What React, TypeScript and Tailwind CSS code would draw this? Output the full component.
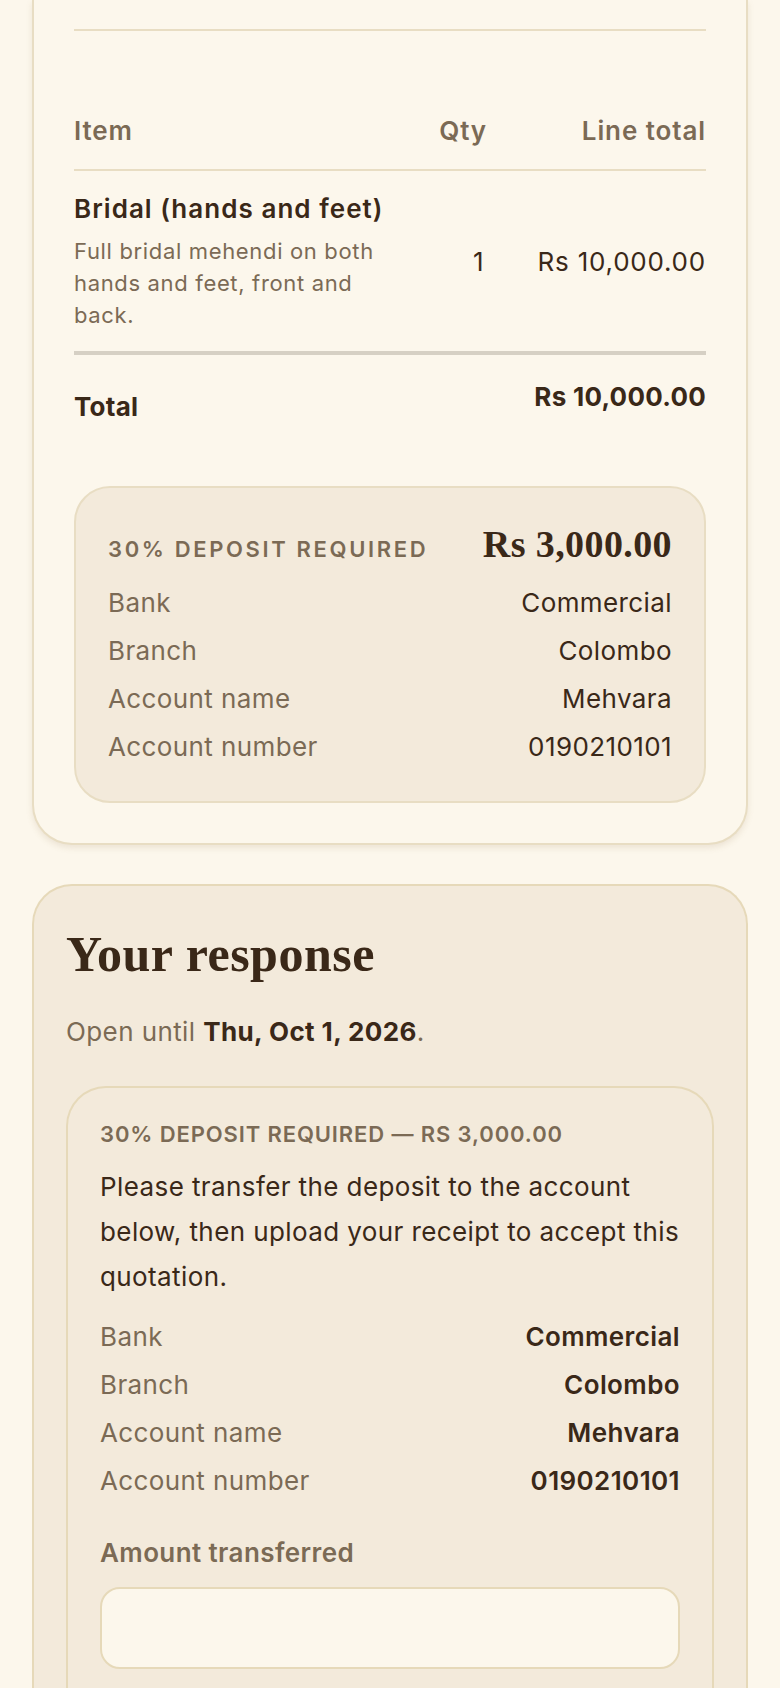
import React from "react";

const sans = "font-['Inter','Noto_Sans',sans-serif]";
const serif = "font-['Liberation_Serif','DejaVu_Serif',serif]";

type Detail = { label: string; value: string };

const bankDetails: Detail[] = [
  { label: "Bank", value: "Commercial" },
  { label: "Branch", value: "Colombo" },
  { label: "Account name", value: "Mehvara" },
  { label: "Account number", value: "0190210101" },
];

function DetailRows({ bold }: { bold?: boolean }) {
  return (
    <div className="flex flex-col gap-2">
      {bankDetails.map((d) => (
        <div key={d.label} className="flex items-center justify-between text-[26px] leading-[40px]">
          <span className="text-[#7b6a55]">{d.label}</span>
          <span className={bold ? "font-semibold text-[#3a2818]" : "text-[#3a2818]"}>{d.value}</span>
        </div>
      ))}
    </div>
  );
}

function QuoteCard() {
  return (
    <div className="rounded-b-[40px] border-2 border-t-0 border-[#e8ddc3] bg-[#fcf7ec] px-10 pb-10 shadow-[0_3px_6px_rgba(140,115,70,0.14)]">
      <div className="pt-[29px]">
        <div className="h-[2px] bg-[#e8ddc3]" />
      </div>

      {/* line items */}
      <div className="mt-[82px]">
        <div className="grid grid-cols-[minmax(0,1fr)_60px_219px] border-b-2 border-[#e8ddc3] pb-5 text-[26px] font-semibold leading-[36px] tracking-[0.035em] text-[#7b6a55]">
          <span>Item</span>
          <span className="text-right">Qty</span>
          <span className="text-right">Line total</span>
        </div>
        <div className="grid grid-cols-[minmax(0,1fr)_60px_219px] items-center border-b-4 border-[#d6d0c4] pb-5 pt-5">
          <div>
            <div className="whitespace-nowrap text-[26px] font-semibold leading-[36px] tracking-[0.04em] text-[#3a2818]">
              Bridal (hands and feet)
            </div>
            <p className="mt-2 w-[320px] text-[22px] leading-[32px] tracking-[0.03em] text-[#7b6a55]">
              Full bridal mehendi on both hands and feet, front and back.
            </p>
          </div>
          <span className="pr-[3px] text-right text-[26px] text-[#3a2818]">1</span>
          <span className="text-right text-[26px] tracking-[0.03em] text-[#3a2818]">Rs 10,000.00</span>
        </div>
        <div className="flex items-start justify-between pt-6 text-[26px] font-bold leading-[36px] tracking-[0.01em] text-[#3a2818]">
          <span className="mt-[10px]">Total</span>
          <span>Rs 10,000.00</span>
        </div>
      </div>

      {/* deposit summary */}
      <div className="mt-[61px] rounded-[36px] border-2 border-[#e8ddc3] bg-[#f3eadb] px-8 pb-[34px] pt-8">
        <div className="flex items-baseline justify-between">
          <span className="text-[22px] font-semibold uppercase tracking-[0.12em] text-[#7b6a55]">
            30% deposit required
          </span>
          <span className={`${serif} text-[38px] font-bold leading-[48px] text-[#3a2818]`}>Rs 3,000.00</span>
        </div>
        <div className="mt-[15px]">
          <DetailRows />
        </div>
      </div>
    </div>
  );
}

function ResponseCard() {
  return (
    <div className="mt-[39px] rounded-t-[40px] border-2 border-b-0 border-[#e6d9b9] bg-[#f3eadb] px-8 pt-[40px]">
      <h2 className={`${serif} text-[50px] font-bold leading-[56px] tracking-[0.01em] text-[#3a2818]`}>
        Your response
      </h2>
      <p className="mt-8 text-[26px] leading-[36px] text-[#7b6a55]">
        Open until <span className="font-bold text-[#3a2818]">Thu, Oct 1, 2026</span>.
      </p>

      <div className="mt-9 rounded-t-[40px] border-2 border-b-0 border-[#e6d9b9] bg-[#f3eadb] px-8 pb-10 pt-8">
        <div className="text-[22px] font-semibold uppercase leading-[28px] tracking-[0.04em] text-[#7b6a55]">
          30% deposit required — Rs 3,000.00
        </div>
        <p className="mt-4 text-[26px] leading-[45px] text-[#3a2818]">
          Please transfer the deposit to the account below, then upload your receipt to accept this quotation.
        </p>
        <div className="mt-[18px]">
          <DetailRows bold />
        </div>
        <label className="mt-[34px] block text-[26px] font-semibold leading-[36px] text-[#7b6a55]">
          Amount transferred
        </label>
        <input
          type="text"
          className="mt-4 block h-[82px] w-full rounded-[20px] border-2 border-[#e6d9b9] bg-[#fcf7ec] px-6 text-[26px] text-[#3a2818] outline-none"
        />
      </div>
    </div>
  );
}

export default function App() {
  return (
    <div className={`${sans} h-[1688px] overflow-hidden bg-[#fcf7ec] px-8 tracking-[0.025em]`}>
      <QuoteCard />
      <ResponseCard />
    </div>
  );
}
